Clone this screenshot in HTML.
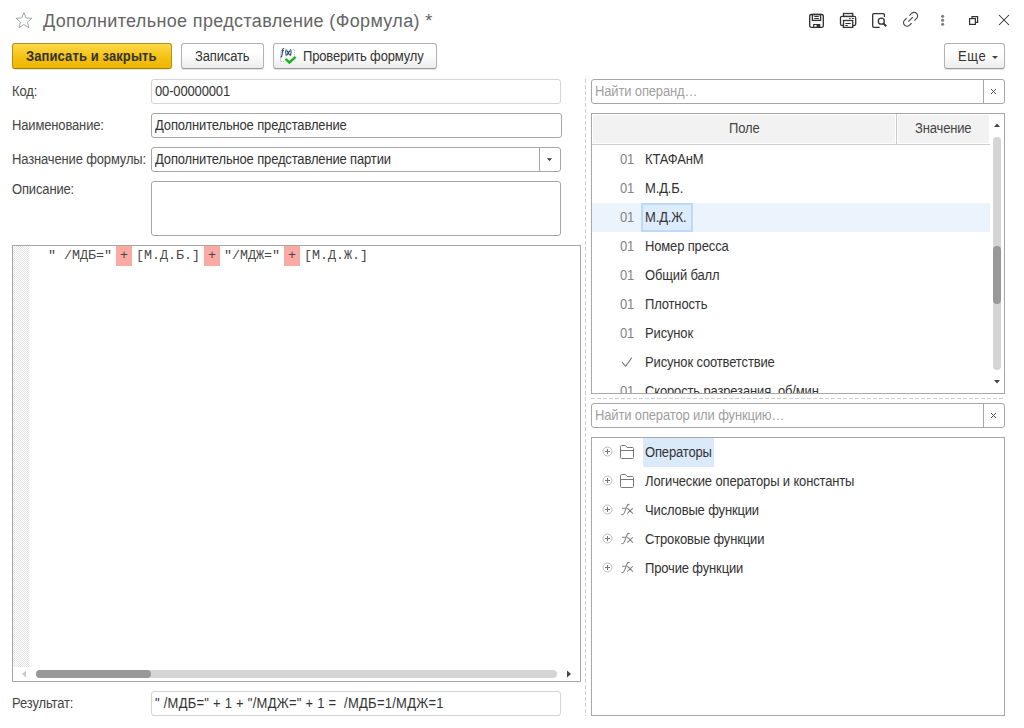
<!DOCTYPE html>
<html><head><meta charset="utf-8">
<style>
*{box-sizing:border-box;margin:0;padding:0}
html,body{width:1024px;height:728px;overflow:hidden;background:#fff}
body{position:relative;font-family:"Liberation Sans",sans-serif;font-size:13px;color:#333;letter-spacing:-0.15px}
.a{position:absolute}
.t{position:absolute;white-space:pre;line-height:16px;transform:scaleY(1.1);transform-origin:0 3.5px}
.lbl{color:#444}
.btn{position:absolute;height:26px;border:1px solid #b3b3b3;border-bottom-color:#9a9a9a;border-radius:3px;background:linear-gradient(#fff 0,#fff 40%,#ececec 100%);box-shadow:0 1px 1px rgba(0,0,0,.12)}
.inp{position:absolute;height:25px;border:1px solid #a6a6a6;border-radius:3px;background:#fff}
.box{position:absolute;border:1px solid #a6a6a6;background:#fff}
.num{color:#858585}
.ph{color:#a0a0a0}
.mono{position:absolute;white-space:pre;font-family:"Liberation Mono",monospace;font-size:13.333px;letter-spacing:0;line-height:16px;color:#484848}
.hl{position:absolute;background:#fba9a3;height:20px;width:16px;top:246px}
</style></head><body>

<!-- title -->
<svg class="a" style="left:0;top:0" width="40" height="40" viewBox="0 0 40 40"><path d="M23.90 12.50 L26.07 17.91 L31.89 18.30 L27.42 22.04 L28.84 27.70 L23.90 24.60 L18.96 27.70 L20.38 22.04 L15.91 18.30 L21.73 17.91 Z" fill="none" stroke="#a2a7ac" stroke-width="1"/></svg>
<div class="t" style="left:43px;top:11px;font-size:18px;line-height:20px;color:#656565;letter-spacing:0.35px;transform:none">Дополнительное представление (Формула) *</div>

<!-- top right icons -->
<svg class="a" style="left:800px;top:5px" width="220" height="30" viewBox="800 5 220 30">
  <!-- save -->
  <g fill="none" stroke="#333" stroke-width="1.35">
    <rect x="809.7" y="14.5" width="13.6" height="12.8" rx="1.6"/>
    <rect x="812.4" y="14.5" width="8.2" height="5.9"/>
    <line x1="814.2" y1="16.5" x2="818.8" y2="16.5" stroke-width="1"/>
    <line x1="814.2" y1="18.5" x2="818.8" y2="18.5" stroke-width="1"/>
    <path d="M813.7 27.3 V24.5 H819.7 V27.3" stroke-width="1.2"/>
  </g>
  <rect x="816.6" y="24.5" width="3" height="2.8" fill="#333"/>
  <!-- print -->
  <g fill="none" stroke="#333" stroke-width="1.3">
    <rect x="843.5" y="13.5" width="9.2" height="3"/>
    <path d="M843.5 25.5 H842 Q840.5 25.5 840.5 24 V18 Q840.5 16.4 842 16.4 H854.2 Q855.7 16.4 855.7 18 V24 Q855.7 25.5 854.2 25.5 H852.7"/>
    <rect x="843.5" y="20.5" width="9.2" height="6.9" fill="#fff"/>
    <line x1="845.3" y1="23.5" x2="850.8" y2="23.5" stroke-width="1"/>
    <line x1="845.3" y1="25.5" x2="847.8" y2="25.5" stroke-width="1"/>
    <path d="M849 18.5 H850.6 M852 18.5 H853.8" stroke-width="1"/>
  </g>
  <!-- preview -->
  <g fill="none" stroke="#333" stroke-width="1.3">
    <path d="M879.7 27.3 H873.8 Q872.7 27.3 872.7 26.2 V14.7 Q872.7 13.6 873.8 13.6 H883.3 Q884.4 13.6 884.4 14.7 V16.9"/>
    <circle cx="881.3" cy="21.2" r="3"/>
  </g>
  <line x1="883.4" y1="23.4" x2="886.2" y2="26.3" stroke="#333" stroke-width="2"/>
  <!-- link -->
  <g fill="none" stroke="#4a4a4a" stroke-width="1.2">
    <path d="M906.6 18.2 L904.6 20.2 A3.5 3.5 0 0 0 909.6 25.2 L911.6 23.2"/>
    <path d="M909.4 15.6 L911.6 13.4 A3.5 3.5 0 0 1 916.6 18.4 L914.4 20.6"/>
    <path d="M908.4 21.6 L912.8 17.2"/>
  </g>
  <!-- more -->
  <g fill="#7a7a7a"><circle cx="942.6" cy="16.3" r="1.5"/><circle cx="942.6" cy="20.3" r="1.5"/><circle cx="942.6" cy="24.3" r="1.5"/></g>
  <!-- restore -->
  <g fill="none" stroke="#333" stroke-width="1.2">
    <path d="M972 18.2 V16.7 H977.6 V22.4 H975.8"/>
    <rect x="969.6" y="18.6" width="5.8" height="5.8" fill="#fff"/>
  </g>
  <!-- close -->
  <g stroke="#383838" stroke-width="1.05"><line x1="999" y1="15" x2="1009" y2="25"/><line x1="1009" y1="15" x2="999" y2="25"/></g>
</svg>

<!-- buttons -->
<div class="btn" style="left:12px;top:43px;width:160px;border-color:#b39113;border-bottom-color:#a07f00;background:linear-gradient(#fcd84a,#f4c00e 60%,#efb600)"></div>
<div class="t" style="left:26px;top:48px;font-weight:bold;color:#333;letter-spacing:0.1px">Записать и закрыть</div>
<div class="btn" style="left:181px;top:43px;width:83px"></div>
<div class="t" style="left:195px;top:48px">Записать</div>
<div class="btn" style="left:273px;top:43px;width:164px"></div>
<svg class="a" style="left:278px;top:46px" width="20" height="20" viewBox="278 46 20 20">
  <path d="M280.5 51.5 V61.5 H284.5 M292.8 49.5 H294.5 V56" fill="none" stroke="#aab8c6" stroke-width="0.9" stroke-dasharray="1.2 0.8"/>
  <g fill="none" stroke="#2a4b6c" stroke-width="1.1">
    <path d="M284.2 48.5 Q283 48.2 282.7 49.6 L281.8 56.2 Q281.5 57.3 280.6 57"/>
    <path d="M281.4 50.7 H284"/>
    <path d="M286.3 49.3 Q284.7 52.5 286.3 55.8"/>
    <path d="M286.9 50.6 L289.7 55.2 M289.7 50.6 L286.9 55.2" stroke-width="1.2"/>
    <path d="M290.5 49.3 Q292.1 52.5 290.5 55.8"/>
  </g>
  <path d="M285.5 58.9 L289.4 62.5 L295.6 56.8" fill="none" stroke="#1db51d" stroke-width="2.4"/>
</svg>
<div class="t" style="left:303px;top:48px">Проверить формулу</div>
<div class="btn" style="left:944px;top:43px;width:61px"></div>
<div class="t" style="left:958px;top:48px;letter-spacing:0.6px">Еще</div>
<svg class="a" style="left:992px;top:56px" width="6" height="3" viewBox="0 0 6 3"><path d="M0 0H6L3 3Z" fill="#444"/></svg>

<!-- form -->
<div class="t lbl" style="left:12px;top:83px">Код:</div>
<div class="inp" style="left:151px;top:79px;width:410px;border-color:#d4d4d4"></div>
<div class="t" style="left:155px;top:83px">00-00000001</div>

<div class="t lbl" style="left:12px;top:117px">Наименование:</div>
<div class="inp" style="left:151px;top:113px;width:411px"></div>
<div class="t" style="left:155px;top:117px">Дополнительное представление</div>

<div class="t lbl" style="left:12px;top:151px">Назначение формулы:</div>
<div class="inp" style="left:151px;top:147px;width:410px"></div>
<div class="a" style="left:539px;top:148px;width:1px;height:23px;background:#a6a6a6"></div>
<svg class="a" style="left:546px;top:158px" width="7" height="4" viewBox="0 0 7 4"><path d="M0.8 0.2H6.2L3.5 3Z" fill="#3a3a3a"/></svg>
<div class="t" style="left:155px;top:151px">Дополнительное представление партии</div>

<div class="t lbl" style="left:12px;top:181px">Описание:</div>
<div class="inp" style="left:151px;top:181px;width:410px;height:55px"></div>

<!-- editor -->
<div class="box" style="left:12px;top:245px;width:569px;height:437px"></div>
<div class="a" style="left:13px;top:246px;width:16px;height:421px;background:repeating-conic-gradient(#e4e4e4 0 25%,#fff 0 50%) 0 0/2px 2px"></div>
<div class="hl" style="left:116px"></div>
<div class="hl" style="left:204px"></div>
<div class="hl" style="left:284px"></div>
<div class="mono" style="left:48px;top:248px">" /МДБ=" + [М.Д.Б.] + "/МДЖ=" + [М.Д.Ж.]</div>
<!-- h scrollbar -->
<svg class="a" style="left:20px;top:669px" width="8" height="10" viewBox="0 0 8 10"><path d="M6 1.5V8.5L2 5Z" fill="#c8c8c8"/></svg>
<div class="a" style="left:36px;top:670px;width:521px;height:8px;border-radius:4px;background:#d5d5d5"></div>
<div class="a" style="left:36px;top:670px;width:115px;height:8px;border-radius:4px;background:#989898"></div>
<svg class="a" style="left:565px;top:669px" width="8" height="10" viewBox="0 0 8 10"><path d="M2 1.5V8.5L6 5Z" fill="#444"/></svg>

<div class="t lbl" style="left:12px;top:695px">Результат:</div>
<div class="inp" style="left:151px;top:691px;width:410px;border-color:#d4d4d4"></div>
<div class="t" style="left:155px;top:695px;letter-spacing:0.25px">" /МДБ=" + 1 + "/МДЖ=" + 1 =  /МДБ=1/МДЖ=1</div>

<!-- separators -->
<div class="a" style="left:585px;top:79px;width:1px;height:637px;background:repeating-linear-gradient(#cfcfcf 0 4px,transparent 4px 6px)"></div>

<!-- right panel: operand search -->
<div class="inp" style="left:591px;top:79px;width:414px"></div>
<div class="a" style="left:983px;top:80px;width:1px;height:23px;background:#a6a6a6"></div>
<div class="t ph" style="left:595px;top:83px">Найти операнд…</div>
<svg class="a" style="left:989px;top:87px" width="9" height="9" viewBox="0 0 9 9"><g stroke="#505050" stroke-width="1"><line x1="2" y1="2" x2="7" y2="7"/><line x1="7" y1="2" x2="2" y2="7"/></g></svg>

<!-- table -->
<div class="box" style="left:591px;top:113px;width:414px;height:281px;overflow:hidden">
  <div class="a" style="left:0;top:0;width:304px;height:30px;background:#f2f2f2;border:1px solid #fff"></div>
  <div class="a" style="left:304px;top:0;width:1px;height:31px;background:#c9c9c9"></div>
  <div class="a" style="left:305px;top:0;width:93px;height:30px;background:#f2f2f2;border:1px solid #fff"></div>
  <div class="a" style="left:0;top:30px;width:398px;height:1px;background:#cfcfcf"></div>
  <div class="a" style="left:0;top:89px;width:398px;height:29px;background:#ebf4fd"></div>
  <div class="a" style="left:49px;top:89px;width:52px;height:29px;background:#ddecfc;border:2px solid #bcdaf7"></div>
  <!-- v scrollbar -->
  <svg class="a" style="left:401px;top:8px" width="8" height="6" viewBox="0 0 8 6"><path d="M1 5H7L4 1.5Z" fill="#444"/></svg>
  <div class="a" style="left:401px;top:23px;width:8px;height:233px;border-radius:4px;background:#d5d5d5"></div>
  <div class="a" style="left:401px;top:132px;width:8px;height:58px;border-radius:4px;background:#999"></div>
  <svg class="a" style="left:401px;top:265px" width="8" height="6" viewBox="0 0 8 6"><path d="M1 1H7L4 4.5Z" fill="#444"/></svg>
</div>
<div class="t" style="left:729px;top:120px;color:#444">Поле</div>
<div class="t" style="left:915px;top:120px;color:#444">Значение</div>

<div class="t num" style="left:620px;top:151px">01</div><div class="t" style="left:645px;top:151px">КТАФАнМ</div>
<div class="t num" style="left:620px;top:180px">01</div><div class="t" style="left:645px;top:180px">М.Д.Б.</div>
<div class="t num" style="left:620px;top:209px">01</div><div class="t" style="left:645px;top:209px">М.Д.Ж.</div>
<div class="t num" style="left:620px;top:238px">01</div><div class="t" style="left:645px;top:238px">Номер пресса</div>
<div class="t num" style="left:620px;top:267px">01</div><div class="t" style="left:645px;top:267px">Общий балл</div>
<div class="t num" style="left:620px;top:296px">01</div><div class="t" style="left:645px;top:296px">Плотность</div>
<div class="t num" style="left:620px;top:325px">01</div><div class="t" style="left:645px;top:325px">Рисунок</div>
<svg class="a" style="left:620px;top:357px" width="13" height="11" viewBox="0 0 13 11"><path d="M2.1 5.1 L5.6 9.3 L11.8 0.6" fill="none" stroke="#7c7c7c" stroke-width="1.1"/></svg>
<div class="t" style="left:645px;top:354px">Рисунок соответствие</div>
<div class="a" style="left:592px;top:380px;width:397px;height:13px;overflow:hidden">
  <div class="t num" style="left:28px;top:3px">01</div><div class="t" style="left:53px;top:3px">Скорость разрезания, об/мин</div>
</div>

<div class="a" style="left:591px;top:398px;width:414px;height:1px;background:repeating-linear-gradient(90deg,#cfcfcf 0 4px,transparent 4px 6px)"></div>

<!-- operator search -->
<div class="inp" style="left:591px;top:403px;width:414px"></div>
<div class="a" style="left:983px;top:404px;width:1px;height:23px;background:#a6a6a6"></div>
<div class="t ph" style="left:595px;top:407px">Найти оператор или функцию…</div>
<svg class="a" style="left:989px;top:411px" width="9" height="9" viewBox="0 0 9 9"><g stroke="#505050" stroke-width="1"><line x1="2" y1="2" x2="7" y2="7"/><line x1="7" y1="2" x2="2" y2="7"/></g></svg>

<!-- tree -->
<div class="box" style="left:591px;top:437px;width:414px;height:279px"></div>
<div class="a" style="left:643px;top:438px;width:71px;height:29px;background:#dbeafb"></div>
<svg class="a" style="left:595px;top:438px" width="50" height="150" viewBox="595 438 50 150">
  <g fill="none" stroke="#bdbdbd" stroke-width="1">
    <circle cx="607.5" cy="451.5" r="4.5"/><circle cx="607.5" cy="480.5" r="4.5"/><circle cx="607.5" cy="509.5" r="4.5"/><circle cx="607.5" cy="538.5" r="4.5"/><circle cx="607.5" cy="567.5" r="4.5"/>
  </g>
  <g stroke="#777" stroke-width="1">
    <path d="M605 451.5H610M607.5 449V454"/><path d="M605 480.5H610M607.5 478V483"/><path d="M605 509.5H610M607.5 507V512"/><path d="M605 538.5H610M607.5 536V541"/><path d="M605 567.5H610M607.5 565V570"/>
  </g>
  <g fill="none" stroke="#7a7a7a" stroke-width="1">
    <path d="M620.5 457.5 V446.5 Q620.5 445.5 621.5 445.5 H625.5 L627 447.5 H632.5 Q633.5 447.5 633.5 448.5 V457.5 Q633.5 458.5 632.5 458.5 H621.5 Q620.5 458.5 620.5 457.5 Z M620.5 450.5 H633.5"/>
    <path d="M620.5 486.5 V475.5 Q620.5 474.5 621.5 474.5 H625.5 L627 476.5 H632.5 Q633.5 476.5 633.5 477.5 V486.5 Q633.5 487.5 632.5 487.5 H621.5 Q620.5 487.5 620.5 486.5 Z M620.5 479.5 H633.5"/>
  </g>
  <g fill="none" stroke="#858585" stroke-width="1.05"><path d="M629.6 504.5 Q627.6 503.9 626.8 506.5 L624.3 512.9 Q623.6 515.1 621.4 514.6 M622 508.3 H626.4 M627.2 508.3 Q630.5 510.5 632.8 513.6 M632.8 508.3 Q629.5 511.3 627.2 513.6"/><path d="M629.6 533.5 Q627.6 532.9 626.8 535.5 L624.3 541.9 Q623.6 544.1 621.4 543.6 M622 537.3 H626.4 M627.2 537.3 Q630.5 539.5 632.8 542.6 M632.8 537.3 Q629.5 540.3 627.2 542.6"/><path d="M629.6 562.5 Q627.6 561.9 626.8 564.5 L624.3 570.9 Q623.6 573.1 621.4 572.6 M622 566.3 H626.4 M627.2 566.3 Q630.5 568.5 632.8 571.6 M632.8 566.3 Q629.5 569.3 627.2 571.6"/></g>
</svg>
<div class="t" style="left:645px;top:444px">Операторы</div>
<div class="t" style="left:645px;top:473px">Логические операторы и константы</div>
<div class="t" style="left:645px;top:502px">Числовые функции</div>
<div class="t" style="left:645px;top:531px">Строковые функции</div>
<div class="t" style="left:645px;top:560px">Прочие функции</div>

</body></html>
